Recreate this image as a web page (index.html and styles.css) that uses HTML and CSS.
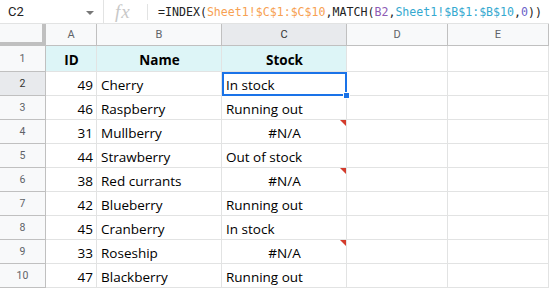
FILE: index.html
```html
<!DOCTYPE html>
<html lang="en">
<head>
  <meta charset="UTF-8">
  <title>Sheet</title>
  <link rel="stylesheet" href="styles.css">
</head>
<body>

<div class="formula-bar">
  <div class="name-box">
    <span>C2</span>
    <span class="caret"></span>
  </div>
  <div class="fx">
    <span class="fx-label">fx</span>
    <span class="fx-sep"></span>
  </div>
  <div class="formula">=INDEX(<span class="ref-orange">Sheet1!$C$1:$C$10</span>,MATCH(<span class="ref-purple">B2</span>,<span class="ref-teal">Sheet1!$B$1:$B$10</span>,<span class="num">0</span>))</div>
</div>

<div class="sheet">
  <div class="corner"></div>
  <div class="col-head">A</div>
  <div class="col-head">B</div>
  <div class="col-head sel">C</div>
  <div class="col-head">D</div>
  <div class="col-head">E</div>

  <div class="row-head first">1</div>
  <div class="cell title">ID</div>
  <div class="cell title">Name</div>
  <div class="cell title">Stock</div>
  <div class="cell"></div>
  <div class="cell"></div>

  <div class="row-head sel">2</div>
  <div class="cell num-cell">49</div>
  <div class="cell">Cherry</div>
  <div class="cell active">In stock<span class="handle"></span></div>
  <div class="cell"></div>
  <div class="cell"></div>

  <div class="row-head">3</div>
  <div class="cell num-cell">46</div>
  <div class="cell">Raspberry</div>
  <div class="cell">Running out</div>
  <div class="cell"></div>
  <div class="cell"></div>

  <div class="row-head">4</div>
  <div class="cell num-cell">31</div>
  <div class="cell">Mullberry</div>
  <div class="cell error">#N/A</div>
  <div class="cell"></div>
  <div class="cell"></div>

  <div class="row-head">5</div>
  <div class="cell num-cell">44</div>
  <div class="cell">Strawberry</div>
  <div class="cell">Out of stock</div>
  <div class="cell"></div>
  <div class="cell"></div>

  <div class="row-head">6</div>
  <div class="cell num-cell">38</div>
  <div class="cell">Red currants</div>
  <div class="cell error">#N/A</div>
  <div class="cell"></div>
  <div class="cell"></div>

  <div class="row-head">7</div>
  <div class="cell num-cell">42</div>
  <div class="cell">Blueberry</div>
  <div class="cell">Running out</div>
  <div class="cell"></div>
  <div class="cell"></div>

  <div class="row-head">8</div>
  <div class="cell num-cell">45</div>
  <div class="cell">Cranberry</div>
  <div class="cell">In stock</div>
  <div class="cell"></div>
  <div class="cell"></div>

  <div class="row-head">9</div>
  <div class="cell num-cell">33</div>
  <div class="cell">Roseship</div>
  <div class="cell error">#N/A</div>
  <div class="cell"></div>
  <div class="cell"></div>

  <div class="row-head">10</div>
  <div class="cell num-cell">47</div>
  <div class="cell">Blackberry</div>
  <div class="cell">Running out</div>
  <div class="cell"></div>
  <div class="cell"></div>
</div>

</body>
</html>
```

FILE: styles.css
```css
* {
  box-sizing: border-box;
}

body {
  margin: 0;
  background: #fff;
  font-family: Roboto, Arial, sans-serif;
  overflow: hidden;
}

.formula-bar {
  display: flex;
  height: 24px;
  border-bottom: 1px solid #e2e3e3;
  align-items: stretch;
}

.name-box {
  flex: 0 0 104px;
  display: flex;
  align-items: center;
  justify-content: space-between;
  padding: 0 9px 0 8px;
  border-right: 1px solid #e2e3e3;
  font-size: 13px;
  color: #222;
}

.caret {
  width: 0;
  height: 0;
  border-left: 4px solid transparent;
  border-right: 4px solid transparent;
  border-top: 4px solid #777;
  margin-top: 2px;
}

.fx {
  flex: 0 0 44px;
  display: flex;
  align-items: center;
  justify-content: space-between;
  padding-left: 11px;
}

.fx-label {
  font-family: "Liberation Serif", serif;
  font-style: italic;
  font-size: 19px;
  color: #c8c8c8;
  letter-spacing: 1px;
}

.fx-sep {
  width: 1px;
  height: 16px;
  background: #e2e3e3;
}

.formula {
  padding-left: 10px;
  display: flex;
  align-items: center;
  font-family: "DejaVu Sans Mono", "Liberation Mono", monospace;
  font-size: 11.6px;
  color: #222;
  white-space: nowrap;
}

.ref-orange { color: #f7a152; }
.ref-purple { color: #8e5bb5; }
.ref-teal { color: #35a9d0; }
.num { color: #6b63c9; }

.sheet {
  display: grid;
  grid-template-columns: 46px 51px 125px 125px 101px 101px;
  grid-template-rows: 22px 26px repeat(9, 24px);
}

.corner {
  background: #f8f9fa;
  border-right: 4px solid #c0c0c0;
  border-bottom: 4px solid #c0c0c0;
}

.col-head {
  background: #f8f9fa;
  border-right: 1px solid #c0c0c0;
  border-bottom: 1px solid #c0c0c0;
  display: flex;
  align-items: center;
  justify-content: center;
  font-size: 11px;
  color: #5f6368;
}

.col-head:last-of-type {
  border-right: none;
}

.col-head.sel,
.row-head.sel {
  background: #e8eaed;
  color: #333;
}

.row-head {
  background: #f8f9fa;
  border-right: 1px solid #c0c0c0;
  border-bottom: 1px solid #c0c0c0;
  display: flex;
  align-items: center;
  justify-content: center;
  font-size: 10.5px;
  color: #5f6368;
}

.cell {
  position: relative;
  border-right: 1px solid #e2e3e3;
  border-bottom: 1px solid #e2e3e3;
  padding: 0 3px 1px 4px;
  display: flex;
  align-items: flex-end;
  font-family: "Open Sans", sans-serif;
  font-size: 13.5px;
  line-height: 18px;
  color: #000;
  white-space: nowrap;
}

.cell.title {
  background: #ddf5f7;
  justify-content: center;
  font-weight: bold;
  font-size: 13.5px;
  padding-bottom: 2px;
}

.num-cell {
  justify-content: flex-end;
}

.error {
  justify-content: center;
}

.error::after {
  content: "";
  position: absolute;
  top: 0;
  right: 0;
  border-top: 6px solid #d33b2c;
  border-left: 6px solid transparent;
}

.active {
  outline: 2px solid #1a73e8;
  outline-offset: -2px;
  z-index: 1;
}

.handle {
  position: absolute;
  right: -4px;
  bottom: -4px;
  width: 7px;
  height: 7px;
  background: #1a73e8;
  border: 1px solid #fff;
}
```
